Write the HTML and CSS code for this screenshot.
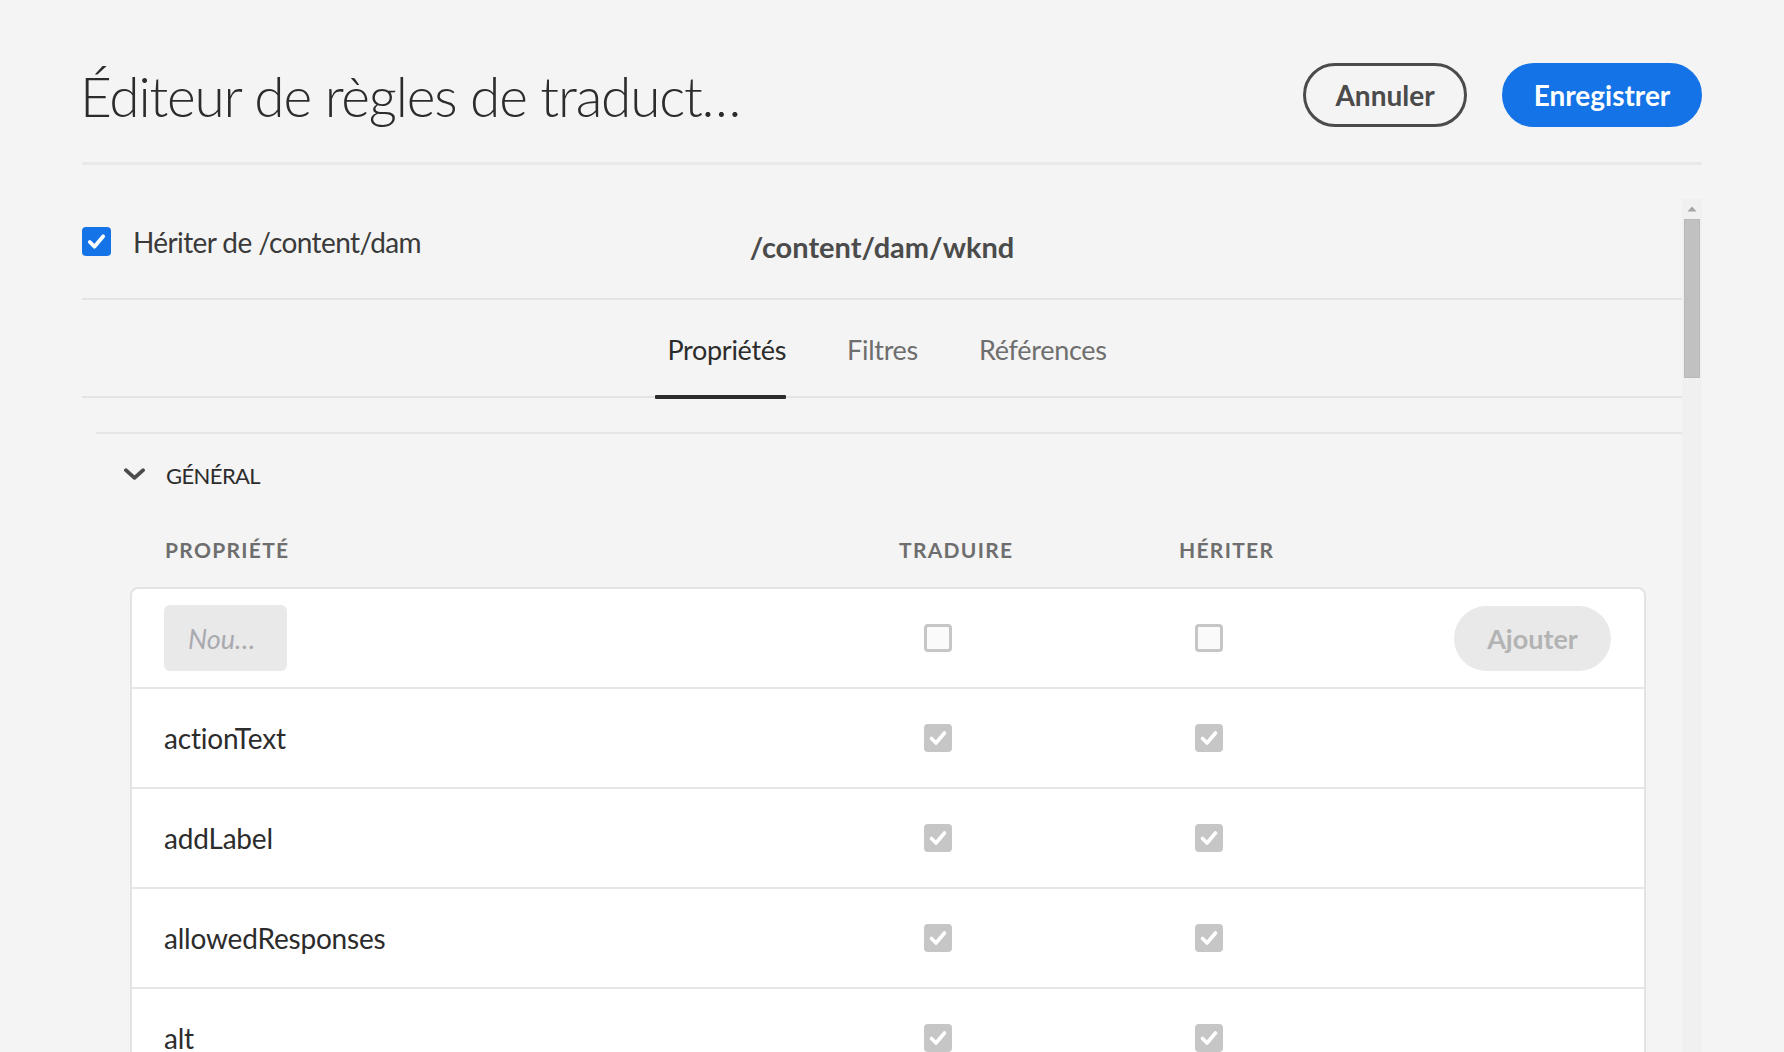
FILE: index.html
```html
<!DOCTYPE html>
<html lang="fr">
<head>
<meta charset="utf-8">
<title>Éditeur de règles de traduction</title>
<link rel="stylesheet" href="styles.css">
</head>
<body>
<div class="page">
  <header class="top">
    <h1 class="title">Éditeur de règles de traduct…</h1>
    <div class="actions">
      <button class="btn btn-outline">Annuler</button>
      <button class="btn btn-primary">Enregistrer</button>
    </div>
  </header>

  <div class="panel">
    <div class="content">
      <div class="inherit-row">
        <label class="inherit">
          <span class="cb cb-on"><svg viewBox="0 0 28 28"><path d="M7.5 14.5 L12 19 L20.5 9" /></svg></span>
          <span class="inherit-label">Hériter de /content/dam</span>
        </label>
        <div class="path">/content/dam/wknd</div>
        <div></div>
      </div>

      <nav class="tabs">
        <div class="tab tab-active">Propriétés</div>
        <div class="tab">Filtres</div>
        <div class="tab">Références</div>
      </nav>

      <section class="accordion">
        <div class="acc-head">
          <svg class="chev" viewBox="0 0 24 14"><polyline points="3,3 12,11 21,3" /></svg>
          <span class="acc-title">GÉNÉRAL</span>
        </div>
        <div class="acc-body">
          <div class="thead">
            <span>PROPRIÉTÉ</span>
            <span>TRADUIRE</span>
            <span>HÉRITER</span>
          </div>
          <div class="card">
            <div class="row">
              <div class="cell-name"><input class="field" type="text" placeholder="Nou…"></div>
              <div><span class="cb cb-empty"></span></div>
              <div><span class="cb cb-empty"></span></div>
              <div><button class="btn-add">Ajouter</button></div>
            </div>
            <div class="row">
              <div class="cell-name">actionText</div>
              <div><span class="cb cb-dis"><svg viewBox="0 0 28 28"><path d="M7.5 14.5 L12 19 L20.5 9" /></svg></span></div>
              <div><span class="cb cb-dis"><svg viewBox="0 0 28 28"><path d="M7.5 14.5 L12 19 L20.5 9" /></svg></span></div>
              <div></div>
            </div>
            <div class="row">
              <div class="cell-name">addLabel</div>
              <div><span class="cb cb-dis"><svg viewBox="0 0 28 28"><path d="M7.5 14.5 L12 19 L20.5 9" /></svg></span></div>
              <div><span class="cb cb-dis"><svg viewBox="0 0 28 28"><path d="M7.5 14.5 L12 19 L20.5 9" /></svg></span></div>
              <div></div>
            </div>
            <div class="row">
              <div class="cell-name">allowedResponses</div>
              <div><span class="cb cb-dis"><svg viewBox="0 0 28 28"><path d="M7.5 14.5 L12 19 L20.5 9" /></svg></span></div>
              <div><span class="cb cb-dis"><svg viewBox="0 0 28 28"><path d="M7.5 14.5 L12 19 L20.5 9" /></svg></span></div>
              <div></div>
            </div>
            <div class="row">
              <div class="cell-name">alt</div>
              <div><span class="cb cb-dis"><svg viewBox="0 0 28 28"><path d="M7.5 14.5 L12 19 L20.5 9" /></svg></span></div>
              <div><span class="cb cb-dis"><svg viewBox="0 0 28 28"><path d="M7.5 14.5 L12 19 L20.5 9" /></svg></span></div>
              <div></div>
            </div>
          </div>
        </div>
      </section>
    </div>

    <div class="scrollbar">
      <div class="sb-arrow"><svg viewBox="0 0 20 20"><polygon points="5.5,12.5 10,7.5 14.5,12.5" /></svg></div>
      <div class="sb-thumb"></div>
    </div>
  </div>
</div>
</body>
</html>
```

FILE: styles.css
```css
* { box-sizing: border-box; }

html, body {
  margin: 0;
  padding: 0;
  height: 100%;
  overflow: hidden;
}

body {
  background: #f4f4f4;
  font-family: Lato, "Open Sans", sans-serif;
  color: #2c2c2c;
}

.page {
  padding: 63px 82px 0 82px;
  height: 100%;
  display: flex;
  flex-direction: column;
}

/* ---------- header ---------- */
.top {
  display: flex;
  align-items: center;
  justify-content: space-between;
  height: 102px;
  padding-bottom: 35px;
  border-bottom: 3px solid #e9e9e9;
  flex: none;
}

.title {
  margin: 0 0 0 -2px;
  font-weight: 300;
  font-size: 55px;
  letter-spacing: -1.2px;
  line-height: 64px;
  color: #2c2c2c;
  white-space: nowrap;
  padding-top: 2px;
}

.actions {
  display: flex;
  gap: 35px;
}

.btn {
  font-family: Lato, sans-serif;
  font-weight: 700;
  font-size: 28px;
  height: 64px;
  border-radius: 32px;
  cursor: pointer;
  padding: 0;
}

.btn-outline {
  width: 164px;
  background: transparent;
  border: 3px solid #4b4b4b;
  color: #4b4b4b;
}

.btn-primary {
  width: 200px;
  background: #1473e6;
  border: 3px solid #1473e6;
  color: #fff;
}

/* ---------- scroll panel ---------- */
.panel {
  margin-top: 34px;
  flex: 1;
  display: flex;
  min-height: 0;
  overflow: hidden;
}

.content {
  flex: 1;
  min-width: 0;
}

.scrollbar {
  width: 20px;
  flex: none;
  background: #f0f0f0;
  display: flex;
  flex-direction: column;
  align-items: center;
}

.sb-arrow {
  width: 20px;
  height: 20px;
}
.sb-arrow svg { display: block; width: 20px; height: 20px; }
.sb-arrow polygon { fill: #a3a3a3; }

.sb-thumb {
  width: 16px;
  height: 159px;
  background: #c1c1c1;
  border: 1px solid #b9b9b9;
}

/* ---------- inherit row ---------- */
.inherit-row {
  display: grid;
  grid-template-columns: 1fr auto 1fr;
  height: 101px;
  border-bottom: 2px solid #e3e3e3;
}

.inherit {
  display: flex;
  align-items: center;
  gap: 22px;
  padding-top: 26px;
  align-self: start;
}

.inherit-label {
  font-size: 28px;
  letter-spacing: -0.6px;
  color: #3a3a3a;
  line-height: 30px;
  padding-top: 2px;
}

.path {
  font-weight: 700;
  font-size: 29px;
  color: #4b4b4b;
  line-height: 34px;
  padding-top: 31px;
}

/* ---------- checkboxes ---------- */
.cb {
  display: inline-block;
  width: 28px;
  height: 28px;
  border-radius: 4px;
  vertical-align: middle;
  flex: none;
}
.cb svg { display: block; width: 28px; height: 28px; }
.cb path {
  fill: none;
  stroke: #fff;
  stroke-width: 3.6;
  stroke-linecap: round;
  stroke-linejoin: round;
}
.cb-on { background: #1473e6; width: 29px; height: 29px; }
.cb-on svg { width: 29px; height: 29px; }
.cb-dis { background: #c6c6c6; }
.cb-empty {
  border: 3px solid #c6c6c6;
  background: #fafafa;
}

/* ---------- tabs ---------- */
.tabs {
  display: flex;
  justify-content: center;
  gap: 61px;
  height: 98px;
  border-bottom: 2px solid #e3e3e3;
  padding-left: 10px;
}

.tab {
  position: relative;
  display: flex;
  align-items: center;
  font-size: 27px;
  letter-spacing: -0.3px;
  color: #6e6e6e;
  padding-top: 2px;
}

.tab-active { color: #2c2c2c; }

.tab-active::after {
  content: "";
  position: absolute;
  left: -12px;
  right: 0;
  bottom: -3px;
  height: 4px;
  border-radius: 1px;
  background: #2c2c2c;
}

/* ---------- accordion ---------- */
.accordion {
  margin-top: 34px;
  margin-left: 14px;
  border-top: 2px solid #e6e6e6;
}

.acc-head {
  height: 80px;
  display: flex;
  align-items: center;
  padding-left: 27px;
  gap: 20px;
}

.chev {
  width: 23px;
  height: 14px;
  display: block;
}
.chev polyline {
  fill: none;
  stroke: #4b4b4b;
  stroke-width: 4;
  stroke-linecap: round;
  stroke-linejoin: round;
}

.acc-title {
  font-size: 22px;
  letter-spacing: -0.6px;
  color: #2c2c2c;
  padding-top: 2px;
}

.acc-body {
  margin-left: 34px;
  margin-right: 36px;
}

.thead {
  display: grid;
  grid-template-columns: 734px 280px 1fr;
  padding: 22px 0 23px 35px;
  font-size: 21px;
  line-height: 28px;
  font-weight: 700;
  letter-spacing: 1.3px;
  color: #6e6e6e;
}

.card {
  background: #fff;
  border: 2px solid #e3e3e3;
  border-radius: 8px;
}

.row {
  display: grid;
  grid-template-columns: 760px 271px 1fr auto;
  align-items: center;
  height: 100px;
  padding: 0 33px 0 32px;
  border-bottom: 2px solid #e6e6e6;
}
.row:first-child { height: 100px; }

.row > div { display: flex; align-items: center; }

.cell-name {
  font-size: 28px;
  letter-spacing: -0.2px;
  color: #2c2c2c;
}

.field {
  width: 123px;
  height: 66px;
  border: none;
  border-radius: 6px;
  background: #e9e9e9;
  padding: 0 0 0 24px;
  font-family: Lato, sans-serif;
  font-size: 27px;
  font-style: italic;
  color: #2c2c2c;
}
.field::placeholder {
  color: #a9a9b0;
  font-style: italic;
}

.btn-add {
  width: 157px;
  height: 65px;
  border: none;
  border-radius: 33px;
  background: #e9e9e9;
  color: #b3b3b3;
  font-family: Lato, sans-serif;
  font-weight: 700;
  font-size: 27px;
  padding: 0;
}
```
